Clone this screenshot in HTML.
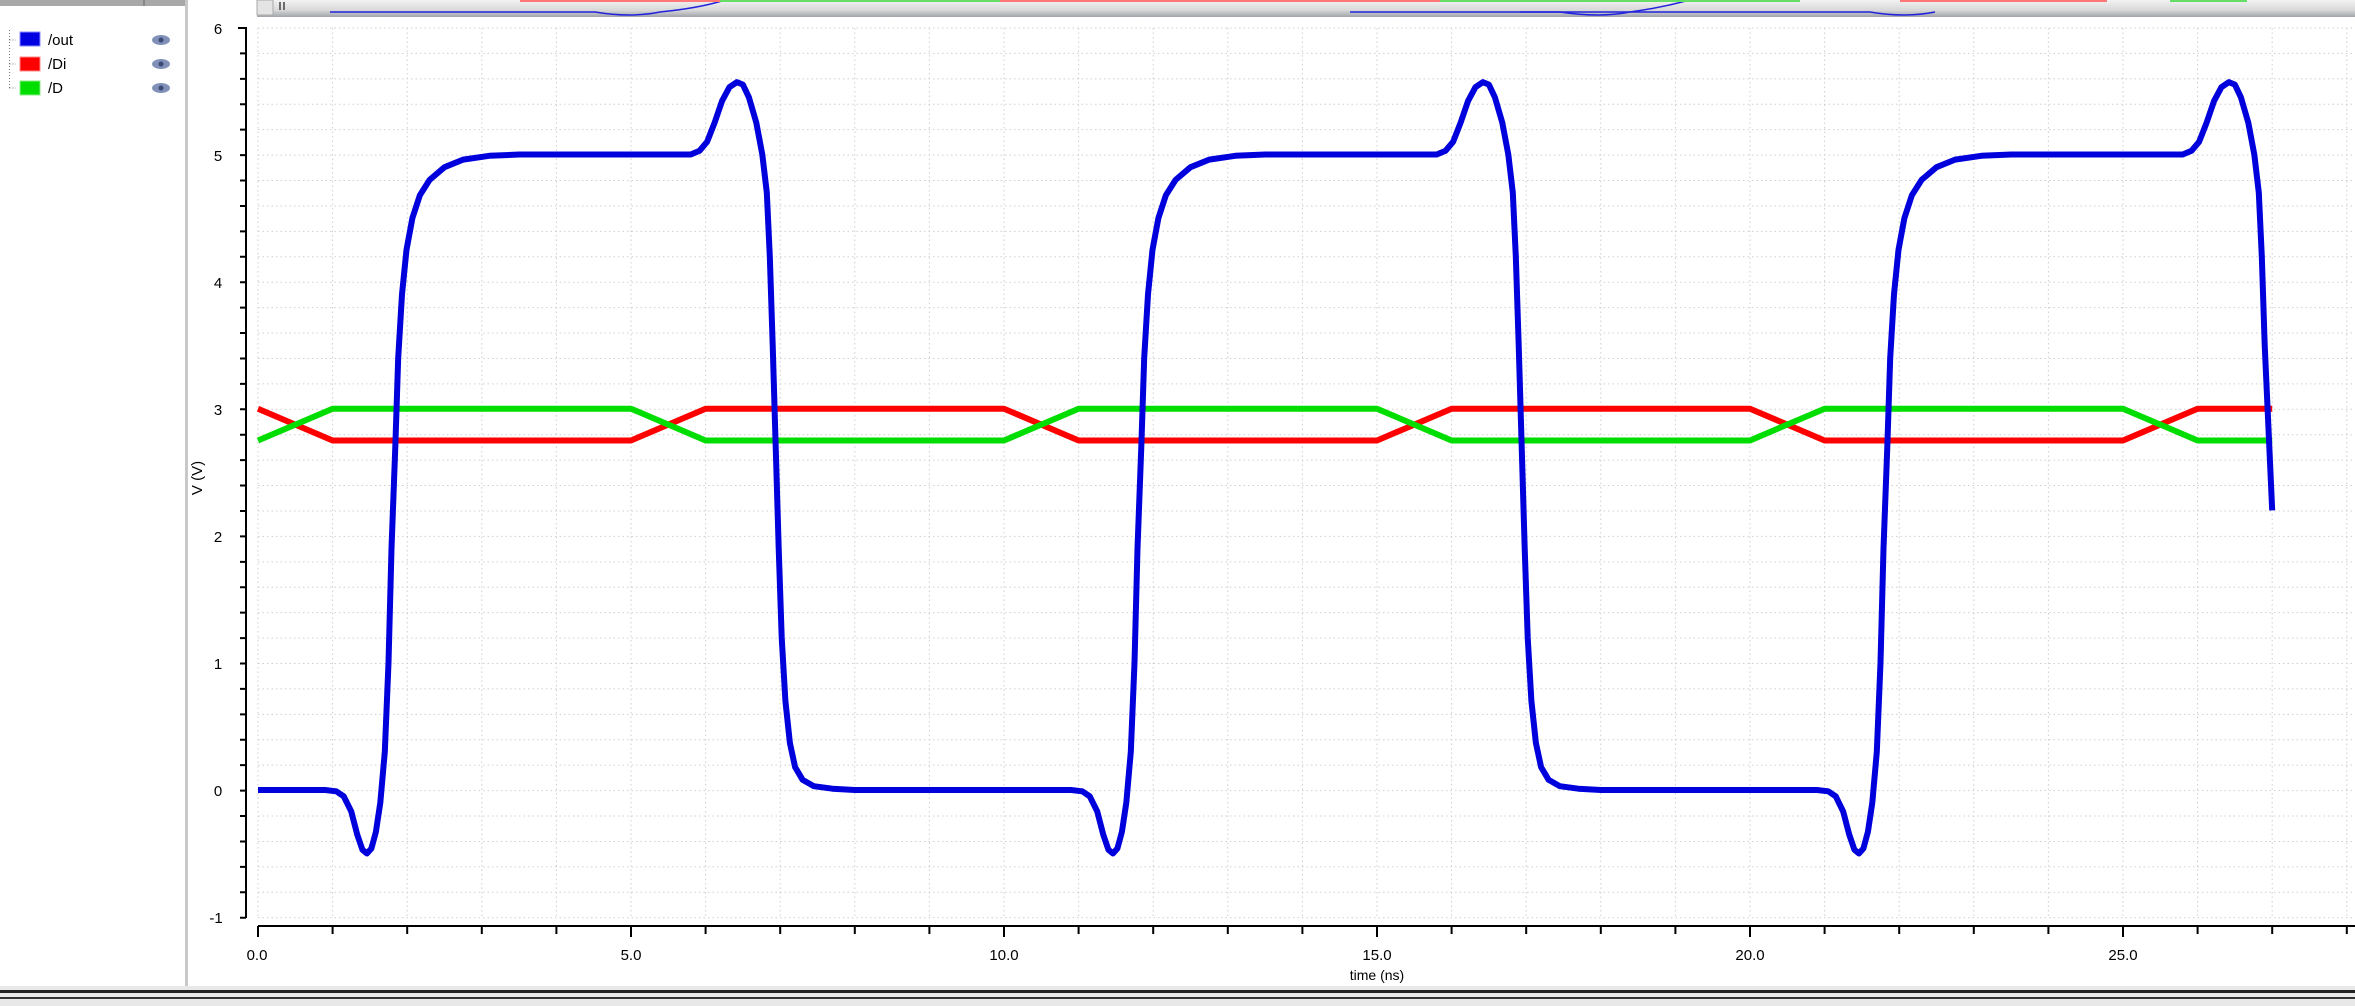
<!DOCTYPE html>
<html><head><meta charset="utf-8"><style>
html,body{margin:0;padding:0;width:2355px;height:1006px;overflow:hidden;background:#fff;font-family:"Liberation Sans",sans-serif;}
</style></head><body>
<svg width="2355" height="1006" xmlns="http://www.w3.org/2000/svg" style="position:absolute;left:0;top:0">
<rect x="0" y="0" width="2355" height="1006" fill="#fff"/>
<rect x="0" y="0" width="186" height="6" fill="#a8a8a8"/>
<rect x="143" y="0" width="2" height="6" fill="#888"/>
<rect x="185" y="0" width="3" height="988" fill="#c8c8c8"/>
<g stroke="#777" stroke-dasharray="1,2" stroke-width="1" fill="none">
<path d="M9.5 30 V89 M9.5 40 H16 M9.5 64 H16 M9.5 88 H16"/>
</g>
<rect x="20" y="32" width="20" height="14" fill="#0000e0" stroke="#8888ff"/>
<rect x="20" y="57" width="20" height="14" fill="#ff0000" stroke="#ff8888"/>
<rect x="20" y="81" width="20" height="14" fill="#00dd00" stroke="#88ee88"/>
<g font-size="15" fill="#000">
<text x="48" y="45">/out</text><text x="48" y="69">/Di</text><text x="48" y="93">/D</text>
</g>
<g fill="#8090b8">
<ellipse cx="161" cy="40" rx="9" ry="5"/><ellipse cx="161" cy="64" rx="9" ry="5"/><ellipse cx="161" cy="88" rx="9" ry="5"/>
</g>
<g fill="#3a4a76"><circle cx="161" cy="40" r="2.5"/><circle cx="161" cy="64" r="2.5"/><circle cx="161" cy="88" r="2.5"/></g>
<defs><linearGradient id="tb" x1="0" y1="0" x2="0" y2="1"><stop offset="0" stop-color="#f2f2f2"/><stop offset="0.6" stop-color="#d8d8d8"/><stop offset="1" stop-color="#a0a4aa"/></linearGradient>
<clipPath id="pc"><rect x="238" y="20" width="2117" height="910"/></clipPath></defs>
<rect x="257" y="0" width="2098" height="17" fill="url(#tb)"/>
<rect x="257" y="0" width="16" height="15" fill="#e4e4e4" stroke="#aaa"/>
<rect x="276" y="0" width="2079" height="17" fill="url(#tb)"/>
<path d="M280 2V10 M284 2V10" stroke="#444" stroke-width="1.5"/>
<g id="mini"></g>
<g id="grid" stroke="#cfcfcf" stroke-width="1" stroke-dasharray="1.5,3"></g>
<g id="axes" stroke="#000" stroke-width="2" fill="none"></g>
<g font-size="15" fill="#000" text-anchor="middle">
<text x="218" y="34">6</text><text x="218" y="161">5</text><text x="218" y="288">4</text><text x="218" y="415">3</text><text x="218" y="542">2</text><text x="218" y="669">1</text><text x="218" y="796">0</text><text x="216" y="923">-1</text>
<text x="257" y="960">0.0</text><text x="631" y="960">5.0</text><text x="1004" y="960">10.0</text><text x="1377" y="960">15.0</text><text x="1750" y="960">20.0</text><text x="2123" y="960">25.0</text>
<text x="1377" y="980" font-size="14">time (ns)</text>
<text transform="translate(202,478) rotate(-90)" font-size="15">V (V)</text>
</g>
<g clip-path="url(#pc)" fill="none" stroke-linejoin="round">
<path id="di" stroke="#ff0000" stroke-width="6"/>
<path id="d" stroke="#00dd00" stroke-width="6"/>
<path id="out" stroke="#0000dd" stroke-width="6"/>
</g>
<rect x="0" y="986" width="2355" height="20" fill="#e8e8e8"/>
<rect x="0" y="990" width="2355" height="3" fill="#222"/>
<rect x="0" y="997" width="2355" height="2" fill="#333"/>
</svg>
<script>
var X=function(t){return 258+74.6*t},Y=function(v){return 790-127.1*v};
var g='';
for(var i=0;i<=28;i++){g+='M'+X(i)+' 28V918 ';}
for(var j=0;j<=35;j++){var y=28+j*25.42;g+='M258 '+y+'H2355 ';}
document.getElementById('grid').innerHTML='<path d="'+g+'"/>';
var a='M246 918V28H238 ';
for(var j=0;j<=35;j++){var y=28+j*25.42;a+='M240 '+y+'H246 ';}
a+='M258 926H2355 ';
for(var i=0;i<=28;i++){a+='M'+X(i)+' 926V'+(i%5==0?937:934)+' ';}
document.getElementById('axes').innerHTML='<path d="'+a+'"/>';
var per=[[0,0],[0.9,0],[1.05,-0.01],[1.15,-0.05],[1.25,-0.17],[1.33,-0.35],[1.4,-0.47],[1.46,-0.5],[1.52,-0.46],[1.58,-0.33],[1.64,-0.1],[1.7,0.3],[1.75,1.0],[1.79,1.9],[1.84,2.7],[1.88,3.4],[1.93,3.9],[1.99,4.25],[2.07,4.5],[2.17,4.68],[2.3,4.8],[2.5,4.9],[2.75,4.96],[3.1,4.99],[3.5,5.0],[5.8,5.0],[5.92,5.03],[6.02,5.1],[6.12,5.25],[6.22,5.42],[6.32,5.53],[6.42,5.57],[6.5,5.55],[6.58,5.45],[6.68,5.25],[6.76,5.0],[6.82,4.7],[6.86,4.2],[6.9,3.5],[6.94,2.7],[6.98,1.9],[7.02,1.2],[7.07,0.7],[7.13,0.37],[7.2,0.18],[7.3,0.08],[7.45,0.03],[7.7,0.01],[8,0],[10,0]];
var o='',first=true;
for(var k=0;k<3;k++){for(var p=0;p<per.length;p++){var t=per[p][0]+10*k,v=per[p][1];if(t>26.9)continue;o+=(first?'M':'L')+X(t).toFixed(1)+' '+Y(v).toFixed(1)+' ';first=false;}}
o+='L'+X(27)+' '+Y(2.2);
document.getElementById('out').setAttribute('d',o);
function sq(hiFirst){var s='',pts=[];for(var k=0;k<3;k++){var b=10*k;pts.push([b,hiFirst?3:2.75],[b+1,hiFirst?2.75:3],[b+5,hiFirst?2.75:3],[b+6,hiFirst?3:2.75]);}pts.push([27,hiFirst?3:2.75]);
for(var i=0;i<pts.length;i++)s+=(i?'L':'M')+X(pts[i][0])+' '+Y(pts[i][1])+' ';return s;}
document.getElementById('di').setAttribute('d',sq(true));
document.getElementById('d').setAttribute('d',sq(false));
var m='<path d="M330 12H595 Q630 18 660 12 Q700 8 725 0" stroke="#2222dd" fill="none" stroke-width="1.5"/><path d="M520 1H1440" stroke="#ff7777" stroke-width="2"/><path d="M720 1H1000" stroke="#66dd66" stroke-width="2"/>'+
'<path d="M1350 12H1560 Q1600 18 1630 12 Q1660 8 1690 0" stroke="#2222dd" fill="none" stroke-width="1.5"/><path d="M1520 12H1870 Q1905 18 1935 12" stroke="#2222dd" fill="none" stroke-width="1.5"/><path d="M1440 1H1800" stroke="#66dd66" stroke-width="2"/><path d="M1900 1H2107" stroke="#ff7777" stroke-width="2"/><path d="M2170 1H2247" stroke="#66dd66" stroke-width="2"/>';
document.getElementById('mini').innerHTML=m;
</script>
</body></html>
